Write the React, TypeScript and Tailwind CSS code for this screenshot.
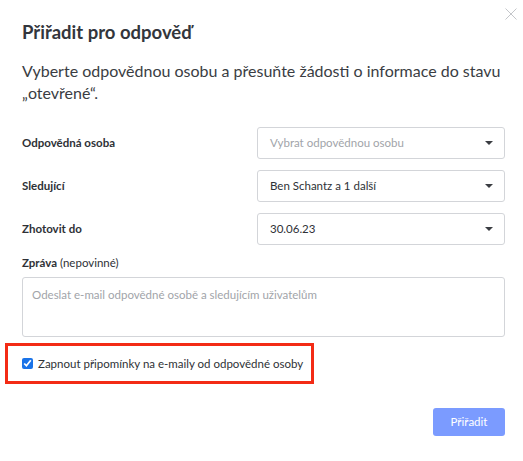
import { useState } from 'react'

const Caret = () => (
  <svg width="8" height="4" viewBox="0 0 8 4" className="shrink-0">
    <path d="M0 0h8L4 4z" fill="#3a3d42" />
  </svg>
)

const SelectBox = ({ value, placeholder }: { value?: string; placeholder?: string }) => (
  <div className="flex h-[32px] w-[248px] items-center justify-between rounded-[3px] border border-[#d3d5d9] bg-white pl-[12px] pr-[11px] text-[11.5px]">
    <span className={value ? 'text-[#2e3136]' : 'text-[#a1a4a9]'}>{value ?? placeholder}</span>
    <Caret />
  </div>
)

const Row = ({ label, children }: { label: string; children: React.ReactNode }) => (
  <div className="flex items-center justify-between">
    <span className="text-[11.5px] font-bold text-[#2e3136]">{label}</span>
    {children}
  </div>
)

export default function App() {
  const [remind, setRemind] = useState(true)

  return (
    <div className="relative h-[461px] w-[523px] bg-white font-['Lato',sans-serif] text-[#2e3136]">
      <button className="absolute right-[5px] top-[7px] flex h-[14px] w-[14px] items-center justify-center">
        <svg width="12" height="12" viewBox="0 0 12 12">
          <path d="M0.5 0.5l11 11M11.5 0.5l-11 11" stroke="#c4c6ca" strokeWidth="1" />
        </svg>
      </button>

      <div className="flex flex-col pl-[22px] pr-[18px] pt-[18px]">
        <h2 className="text-[18.5px] font-bold leading-[28px] text-[#33363c]">Přiřadit pro odpověď</h2>

        <p className="mt-[14px] text-[16px] leading-[22px] text-[#3a3d43]">
          Vyberte odpovědnou osobu a přesuňte žádosti o informace do stavu „otevřené“.
        </p>

        <div className="mt-[23px] flex flex-col gap-[11px]">
          <Row label="Odpovědná osoba">
            <SelectBox placeholder="Vybrat odpovědnou osobu" />
          </Row>
          <Row label="Sledující">
            <SelectBox value="Ben Schantz a 1 další" />
          </Row>
          <Row label="Zhotovit do">
            <SelectBox value="30.06.23" />
          </Row>
        </div>

        <div className="mt-[9px] text-[11.5px] leading-[18px]">
          <span className="font-bold">Zpráva</span> (nepovinné)
        </div>
        <div className="mt-[5px] h-[60px] rounded-[3px] border border-[#d3d5d9] px-[9px] pt-[8px] text-[11.5px] text-[#a1a4a9]">
          Odeslat e-mail odpovědné osobě a sledujícím uživatelům
        </div>
      </div>

      <div className="ml-[5px] mt-[6px] flex h-[41px] w-[309px] items-center border-[3px] border-[#f32b15] pl-[14px]">
        <label className="flex items-center gap-[5px] whitespace-nowrap text-[11.5px] text-[#2e3136]">
          <input
            type="checkbox"
            checked={remind}
            onChange={(e) => setRemind(e.target.checked)}
            className="m-0 h-[11px] w-[11px] accent-[#1a73e8]"
          />
          Zapnout připomínky na e-maily od odpovědné osoby
        </label>
      </div>

      <div className="mt-[24px] flex justify-end pr-[18px]">
        <button className="h-[28px] w-[72px] rounded-[3px] bg-[#7b9bff] text-[11.5px] text-white">Přiřadit</button>
      </div>
    </div>
  )
}
